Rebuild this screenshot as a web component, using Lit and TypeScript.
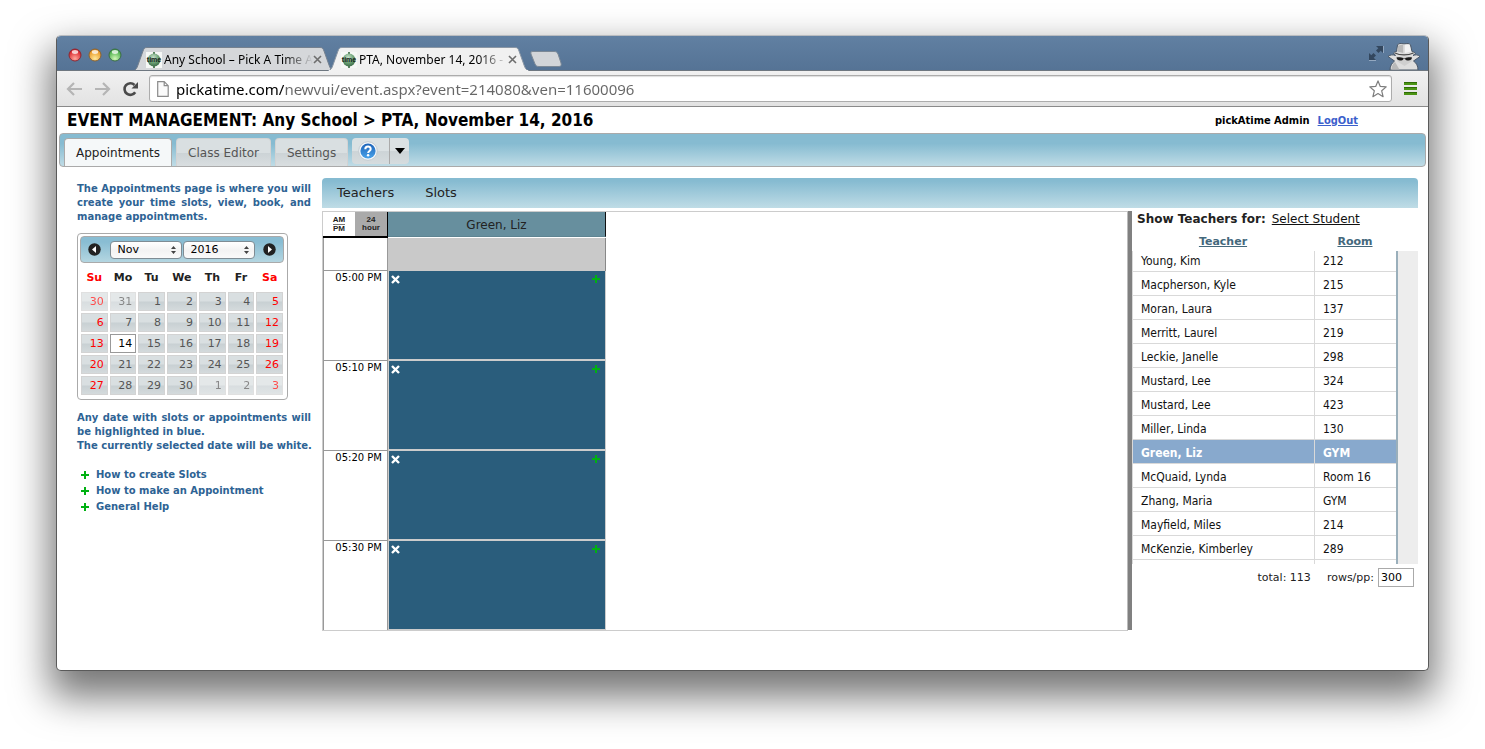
import { LitElement, html, css, svg } from "lit";
import { customElement, state } from "lit/decorators.js";
import { classMap } from "lit/directives/class-map.js";

interface Teacher {
  name: string;
  room: string;
}

const TEACHERS: Teacher[] = [
  { name: "Young, Kim", room: "212" },
  { name: "Macpherson, Kyle", room: "215" },
  { name: "Moran, Laura", room: "137" },
  { name: "Merritt, Laurel", room: "219" },
  { name: "Leckie, Janelle", room: "298" },
  { name: "Mustard, Lee", room: "324" },
  { name: "Mustard, Lee", room: "423" },
  { name: "Miller, Linda", room: "130" },
  { name: "Green, Liz", room: "GYM" },
  { name: "McQuaid, Lynda", room: "Room 16" },
  { name: "Zhang, Maria", room: "GYM" },
  { name: "Mayfield, Miles", room: "214" },
  { name: "McKenzie, Kimberley", room: "289" },
  { name: "", room: "" },
];

const SLOTS = ["05:00 PM", "05:10 PM", "05:20 PM", "05:30 PM"];
const WEEKDAYS = ["Su", "Mo", "Tu", "We", "Th", "Fr", "Sa"];
const WEEKS = [
  [30, 31, 1, 2, 3, 4, 5],
  [6, 7, 8, 9, 10, 11, 12],
  [13, 14, 15, 16, 17, 18, 19],
  [20, 21, 22, 23, 24, 25, 26],
  [27, 28, 29, 30, 1, 2, 3],
];

const plus = html`<svg class="plus" width="8" height="8" viewBox="0 0 8 8" aria-hidden="true">
  <path d="M3 0h2v3h3v2H5v3H3V5H0V3h3z" fill="#00b112" />
</svg>`;

const favicon = html`<svg class="favicon" width="16" height="16" viewBox="0 0 16 16" aria-hidden="true">
  <defs>
    <radialGradient id="globe" cx="45%" cy="30%" r="70%">
      <stop offset="0" stop-color="#c4e0c8" />
      <stop offset="0.6" stop-color="#6a9f73" />
      <stop offset="1" stop-color="#3b6c48" />
    </radialGradient>
  </defs>
  <rect width="16" height="16" fill="#f6f8f6" />
  <path d="M7 0h2v2H7zM7 14h2v2H7z" fill="#5b8462" />
  <circle cx="8" cy="8" r="6.5" fill="url(#globe)" />
  <text x="8" y="10" text-anchor="middle" font-family="Liberation Sans, Arial, sans-serif" font-size="7" font-weight="bold" fill="#14211a">time</text>
</svg>`;

const crossIcon = html`<svg width="9" height="9" viewBox="0 0 9 9" aria-hidden="true">
  <path d="M1 1l7 7M8 1l-7 7" stroke="#6e6e6e" stroke-width="1.600" fill="none" />
</svg>`;

/* Browser window: title strip with tabs, address bar, page slot. */
@customElement("browser-window")
export class BrowserWindow extends LitElement {
  static styles = css`
    :host {
      display: block;
      border: 1px solid #5a5a5a;
      border-top-color: #b9bcc0;
      border-radius: 5px;
      background: #fff;
      box-shadow: 0 20px 38px 6px rgba(0, 0, 0, 0.54);
    }
    button {
      border: 0;
      padding: 0;
      margin: 0;
      background: none;
      font: inherit;
      color: inherit;
    }
    svg {
      display: block;
    }
    .strip,
    .toolbar {
      font-family: "Noto Sans", "Open Sans", sans-serif;
    }
    .strip {
      display: flex;
      align-items: flex-end;
      height: 34px;
      border-bottom: 1px solid #6e7780;
      border-radius: 4px 4px 0 0;
      background: linear-gradient(#6180a2, #557395);
    }
    .lights {
      display: flex;
      gap: 6px;
      align-self: center;
      padding: 3px 0 0 11px;
      width: 65px;
    }
    .tab {
      position: relative;
      display: flex;
      align-items: center;
      box-sizing: border-box;
      width: 201px;
      height: 24px;
      margin-bottom: -1px;
      padding: 1px 12px 0 13px;
      font-size: 12px;
      line-height: 16px;
      color: #000;
    }
    .tab + .tab {
      margin-left: -6px;
    }
    .shape {
      position: absolute;
      inset: 0;
    }
    .favicon {
      position: relative;
      flex: none;
    }
    .label {
      position: relative;
      flex: 1;
      margin-left: 2px;
      white-space: nowrap;
      text-align: left;
      mask-image: linear-gradient(to right, #000 calc(100% - 30px), transparent);
    }
    .close {
      position: relative;
      margin: 0;
    }
    .spacer {
      flex: 1;
    }
    .newtab {
      margin: 0 0 3px 1px;
    }
    .expand {
      margin: 0 3px 9px 0;
    }
    .spy {
      margin-right: 7px;
    }
    .toolbar {
      display: flex;
      align-items: center;
      height: 35px;
      border-bottom: 1px solid #8a8a8a;
      background: linear-gradient(#f1f1f1, #e2e2e2);
      padding: 0 11px 0 9px;
    }
    .nav {
      display: flex;
      gap: 11px;
      align-items: center;
      width: 83px;
    }
    .omnibox {
      display: flex;
      flex: 1;
      align-items: center;
      box-sizing: border-box;
      height: 27px;
      border: 1px solid #acacac;
      border-radius: 3px;
      background: #fff;
      box-shadow: inset 0 1px 1px #ddd;
      padding: 0 4px 0 7px;
    }
    .url {
      flex: 1;
      min-width: 0;
      border: 0;
      padding: 0;
      margin: 0 0 0 7px;
      font-family: inherit;
      font-size: 15px;
      line-height: 22px;
      color: #555;
      -webkit-text-fill-color: transparent;
      background: linear-gradient(to right, #000 108px, #666 108px);
      -webkit-background-clip: text;
      background-clip: text;
    }
    .menu {
      margin-left: 12px;
    }
  `;

  private light(a: string, b: string, c: string, id: string) {
    return html`<svg width="14" height="14" viewBox="0 0 14 14" aria-hidden="true">
      <defs>
        <radialGradient id=${id} cx="50%" cy="80%" r="75%">
          <stop offset="0" stop-color=${a} />
          <stop offset="1" stop-color=${b} />
        </radialGradient>
      </defs>
      <circle cx="7" cy="7" r="6" fill="url(#${id})" stroke=${c} />
      <ellipse cx="7" cy="4" rx="3.200" ry="1.900" fill="#fff" opacity="0.75" />
    </svg>`;
  }

  private tab(label: string, active: boolean) {
    return html`<button class="tab">
      <svg class="shape" width="201" height="24" viewBox="0 0 201 24" aria-hidden="true">
        <path
          d="M0 24C3 23 4 21 5 18L10 4C11 1 12 .5 14 .5H187C189 .5 190 1 191 4L196 18C197 21 198 23 201 24Z"
          fill=${active ? "#f1f1f1" : "#d5d7da"}
          stroke=${active ? "#8b97a5" : "#75818f"}
        />
        ${active ? svg`<path d="M1 23.500H200" stroke="#f1f1f1" />` : svg`<path d="M0 23.500H201" stroke="#6e7780" />`}
      </svg>
      ${favicon}
      <span class="label">${label}</span>
      <span class="close">${crossIcon}</span>
    </button>`;
  }

  render() {
    return html`
      <div class="strip">
        <div class="lights">
          ${this.light("#ffa79c", "#d3101a", "#8a2a34", "red")}
          ${this.light("#ffe99a", "#e58a10", "#8a6334", "amber")}
          ${this.light("#d2f9b8", "#34a13a", "#3c6d48", "green")}
        </div>
        ${this.tab("Any School – Pick A Time A", false)} ${this.tab("PTA, November 14, 2016 -", true)}
        <button class="newtab" aria-label="New tab">
          <svg width="32" height="16" viewBox="0 0 32 16">
            <path d="M3 .5H24C26 .5 27 1 28 3L31 12C31.500 14 31 15.500 29 15.500H9C7 15.500 6 15 5 13L1 3C.5 1 1 .5 3 .5Z" fill="#d2d5d9" stroke="#7b8896" />
          </svg>
        </button>
        <span class="spacer"></span>
        <button class="expand" aria-label="Full screen">
          <svg width="16" height="16" viewBox="0 0 16 16" fill="#33475e">
            <path d="M8 1h7v7l-2.300-2.300L10.500 8 8 5.500l2.300-2.200z" />
            <path d="M8 15H1V8l2.300 2.300L5.500 8 8 10.500l-2.300 2.200z" />
            <path d="M1 15.500h7M15.500 1v7" stroke="#93a8c0" fill="none" />
          </svg>
        </button>
        <svg class="spy" width="34" height="28" viewBox="0 0 34 28" aria-hidden="true">
          <path
            d="M3 28C3 24 5 21 7.500 19L1 14.500C3.500 12.500 6 12.500 8.500 13.500L6.500 11C7.500 10 8.500 9.500 9.500 9.500L10.500 3C11.500 1 14 1.500 17 1.800 20 1.500 22.500 1 23.500 3L25 9.500C26.500 9.800 28 10.500 28.500 11.500L26 13.500C28.500 12.500 31 12.500 33 14.500L26.500 19C29.500 21 31 24 31 28z"
            fill="#dedede"
            stroke="#4a5868"
          />
          <path d="M11.200 3.500l-1 6 6 1.500V2.500zM8 20l4.500 7.500H4.500C4.500 24 6 21.500 8 20z" fill="#b9b9b9" />
          <path d="M18 3l4.500-.5 1.500 7-6 1.500z" fill="#f4f4f4" />
          <path d="M9 14.500h16.500l-1 5-7 4.500-7-4.500z" fill="#cfcfcf" />
          <path d="M8 11c5 2.600 13 2.600 18.500 0" stroke="#4a4a4a" stroke-width="1.300" fill="none" />
          <path d="M9.500 15.500c2.500-.4 5.500 0 7 .9h1.500c1.500-.9 4.500-1.300 7-.9-.4 2.200-1.600 3-3.400 3S18.700 18 18 16.900h-1.500c-.7 1.100-1.600 1.600-3.400 1.600s-3.200-.8-3.600-3z" fill="#1c1c1c" />
        </svg>
      </div>
      <div class="toolbar">
        <div class="nav">
          <button aria-label="Back">
            <svg width="17" height="14" viewBox="0 0 17 14" fill="none" stroke="#b5b5b5" stroke-width="2.200">
              <path d="M16 7H2.500M8 1L2 7l6 6" />
            </svg>
          </button>
          <button aria-label="Forward">
            <svg width="17" height="14" viewBox="0 0 17 14" fill="none" stroke="#b5b5b5" stroke-width="2.200">
              <path d="M1 7h13.500M9 1l6 6-6 6" />
            </svg>
          </button>
          <button aria-label="Reload">
            <svg width="17" height="16" viewBox="0 0 17 16">
              <path d="M13.200 11.200A5.800 5.800 0 1 1 12.500 4" fill="none" stroke="#4a4a4a" stroke-width="2.600" />
              <path d="M16 1v6.500H9.500z" fill="#4a4a4a" />
            </svg>
          </button>
        </div>
        <div class="omnibox">
          <svg width="12" height="16" viewBox="0 0 12 16" aria-hidden="true">
            <path d="M.7.700h6.500l4 4v10.600H.7zM7.200.700v4h4" fill="#fafafa" stroke="#8b8b8b" stroke-width="1.200" />
          </svg>
          <input class="url" aria-label="Address" value="pickatime.com/newvui/event.aspx?event=214080&ven=11600096" />
          <button aria-label="Bookmark this page">
            <svg width="18" height="18" viewBox="0 0 18 18">
              <path d="M9 .9l2.300 5.500 5.900.5-4.500 3.900 1.400 5.900L9 13.600l-5.100 3.100 1.400-5.900L.8 6.900l5.900-.5z" fill="#fff" stroke="#7d7d7d" stroke-width="1.200" stroke-linejoin="round" />
            </svg>
          </button>
        </div>
        <button class="menu" aria-label="Menu">
          <svg width="13" height="13" viewBox="0 0 13 13" fill="#4b9413">
            <path d="M0 0h13v3H0zM0 5h13v3H0zM0 10h13v3H0z" />
            <path d="M0 0h13v1H0zM0 5h13v1H0zM0 10h13v1H0z" fill="#2f6b06" />
          </svg>
        </button>
      </div>
      <slot></slot>
    `;
  }
}

/* Month calendar used to pick the event date. */
@customElement("date-picker")
export class DatePicker extends LitElement {
  static styles = css`
    :host {
      display: block;
      box-sizing: border-box;
      width: 211px;
      border: 1px solid #aaa;
      border-radius: 4px;
      padding: 2px 2px 3px;
      font-family: "DejaVu Sans", Verdana, sans-serif;
      font-size: 11px;
      line-height: 14px;
      color: #222;
    }
    .head {
      display: flex;
      align-items: center;
      height: 25px;
      margin-right: 1px;
      border: 1px solid #aaa;
      border-radius: 4px;
      background: linear-gradient(#89bdd3 20%, #b4d6e1);
      padding: 0 7px;
    }
    .arrow {
      border: 0;
      padding: 0;
      background: none;
      height: 13px;
    }
    .arrow svg {
      display: block;
    }
    .fields {
      display: flex;
      flex: 1;
      justify-content: center;
      gap: 1px;
    }
    .field {
      position: relative;
      width: 72px;
    }
    select {
      display: block;
      appearance: none;
      box-sizing: border-box;
      width: 100%;
      height: 18px;
      border: 1px solid #7f8c94;
      border-radius: 4px;
      background: linear-gradient(#fff, #f3f3f3 50%, #fafafa);
      padding: 0 7px;
      font: inherit;
      color: #000;
    }
    .chevrons {
      position: absolute;
      right: 6px;
      top: 5px;
      pointer-events: none;
    }
    table {
      width: 204px;
      border-spacing: 0;
      margin-top: 5px;
      table-layout: fixed;
    }
    th {
      height: 20px;
      padding: 0 0 3px;
      font-weight: bold;
      text-align: center;
    }
    th:nth-child(4) {
      width: 32px;
    }
    td {
      padding: 1px;
    }
    .day {
      display: block;
      box-sizing: border-box;
      width: 100%;
      height: 19px;
      border: 1px solid #d3d3d3;
      padding: 0 3px 0 0;
      background: linear-gradient(#d9dfe1 48%, #c8d0d3 52%, #d4dadc);
      font: inherit;
      color: #555;
      text-align: right;
    }
    .weekend {
      color: #f00;
    }
    .other {
      opacity: 0.7;
    }
    .selected {
      border-color: #999;
      background: #fff;
      color: #000;
    }
  `;

  @state() private selected = 14;

  private arrow(label: string, d: string) {
    return html`<button class="arrow" aria-label=${label}>
      <svg width="13" height="13" viewBox="0 0 13 13">
        <circle cx="6.500" cy="6.500" r="6.200" fill="#222" />
        <path d=${d} fill="#fff" />
      </svg>
    </button>`;
  }

  private field(label: string, value: string) {
    return html`<div class="field">
      <select aria-label=${label}>
        <option selected>${value}</option>
      </select>
      <svg class="chevrons" width="5" height="8" viewBox="0 0 5 8" aria-hidden="true">
        <path d="M2.500 0L5 3H0zM2.500 8L5 5H0z" fill="#444" />
      </svg>
    </div>`;
  }

  private cell(day: number, week: number, column: number) {
    const other = (week === 0 && day > 20) || (week === 4 && day < 20);
    const classes = {
      day: true,
      weekend: column === 0 || column === 6,
      other,
      selected: !other && day === this.selected,
    };
    return html`<td>
      <button class=${classMap(classes)} @click=${() => !other && (this.selected = day)}>${day}</button>
    </td>`;
  }

  render() {
    return html`
      <div class="head">
        ${this.arrow("Previous month", "M8 3v7L4 6.500z")}
        <div class="fields">${this.field("Month", "Nov")} ${this.field("Year", "2016")}</div>
        ${this.arrow("Next month", "M5 3v7l4-3.500z")}
      </div>
      <table>
        <thead>
          <tr>
            ${WEEKDAYS.map((d, i) => html`<th class=${i % 6 === 0 ? "weekend" : ""}>${d}</th>`)}
          </tr>
        </thead>
        <tbody>
          ${WEEKS.map((w, i) => html`<tr>${w.map((d, c) => this.cell(d, i, c))}</tr>`)}
        </tbody>
      </table>
    `;
  }
}

/* Time slots of the chosen teacher. */
@customElement("slot-schedule")
export class SlotSchedule extends LitElement {
  static styles = css`
    :host {
      display: block;
      border: 1px solid #ccc;
      border-right-color: #bbb;
      font-family: "DejaVu Sans", Verdana, sans-serif;
      color: #222;
    }
    button {
      border: 0;
      padding: 0;
      background: none;
    }
    svg {
      display: block;
    }
    .grid {
      display: grid;
      grid-template-columns: 65px 218px;
    }
    .clock {
      display: grid;
      grid-template-columns: 1fr 1fr;
      box-sizing: border-box;
      height: 26px;
      border-right: 1px solid #000;
      border-bottom: 2px solid #000;
    }
    .mode {
      font: bold 8px/8px "Liberation Sans", Arial, sans-serif;
      color: #222;
      text-align: center;
    }
    .mode.off {
      background: #aaa;
    }
    .am {
      display: inline-block;
      border-bottom: 1px solid #777;
    }
    .teacher {
      box-sizing: border-box;
      height: 25px;
      border-right: 1px solid #111;
      border-bottom: 1px solid #5f8592;
      background: #678f9e;
      font-size: 12px;
      line-height: 26px;
      text-align: center;
    }
    .time {
      box-sizing: border-box;
      height: 90px;
      border: solid #999;
      border-width: 0 1px 1px;
      padding-right: 5px;
      font-size: 10px;
      line-height: 14px;
      text-align: right;
      color: #000;
    }
    .time.blank,
    .closed {
      height: 33px;
    }
    .closed {
      box-sizing: border-box;
      border-right: 1px solid #888;
      background: #c9c9c9;
    }
    .slot {
      display: flex;
      justify-content: space-between;
      align-items: flex-start;
      box-sizing: border-box;
      height: 90px;
      border: solid #ccc;
      border-width: 0 1px 2px;
      background: #2a5d7c;
      padding: 4px 5px 0 2px;
    }
    .time.last {
      height: 89px;
      border-bottom: 0;
    }
    .slot.last {
      height: 89px;
      border-bottom-width: 1px;
    }
  `;

  render() {
    return html`<div class="grid">
      <div class="clock">
        <button class="mode"><span class="am">AM</span><br />PM</button>
        <button class="mode off">24<br />hour</button>
      </div>
      <div class="teacher">Green, Liz</div>
      <div class="time blank"></div>
      <div class="closed"></div>
      ${SLOTS.map((t, i) => {
        const last = i === SLOTS.length - 1;
        return html`
          <div class=${classMap({ time: true, last })}>${t}</div>
          <div class=${classMap({ slot: true, last })}>
            <button aria-label="Remove slot">
              <svg width="9" height="9" viewBox="0 0 9 9">
                <path d="M1 1l7 7M8 1l-7 7" stroke="#fff" stroke-width="2.400" />
              </svg>
            </button>
            <button aria-label="Add appointment">${plus}</button>
          </div>
        `;
      })}
    </div>`;
  }
}

/* Teacher list beside the schedule. */
@customElement("teacher-list")
export class TeacherList extends LitElement {
  static styles = css`
    :host {
      display: block;
      font-family: "DejaVu Sans", Verdana, sans-serif;
      font-size: 11px;
      color: #222;
    }
    .for {
      display: flex;
      gap: 6px;
      padding-left: 5px;
      font-size: 12px;
      line-height: 16px;
    }
    .for a {
      color: #111;
    }
    table {
      width: 100%;
      border-spacing: 0;
      table-layout: fixed;
    }
    .room {
      width: 82px;
    }
    .heads {
      padding-right: 22px;
      margin: 7px 0 2px;
    }
    .heads a {
      color: #44687c;
      font-weight: bold;
      font-size: 11px;
    }
    th {
      height: 15px;
      padding: 0;
      text-align: center;
    }
    .view {
      height: 313px;
      overflow: hidden;
      border-right: 20px solid #ededed;
    }
    .rows {
      margin-top: -3px;
      border-right: 2px solid #9aafbb;
      font-family: "DejaVu Sans Condensed", Tahoma, "Noto Sans", sans-serif;
      font-size: 12px;
      line-height: 16px;
      color: #111;
    }
    .rows td {
      height: 21px;
      box-sizing: content-box;
      border-left: 1px solid #d9d9d9;
      border-bottom: 1px solid #d9d9d9;
      padding: 2px 0 0 8px;
    }
    .current td {
      background: #88a9cd;
      color: #fff;
      font-weight: bold;
    }
    .foot {
      display: flex;
      justify-content: flex-end;
      align-items: center;
      gap: 4px;
      padding: 4px 4px 0 0;
      line-height: 14px;
    }
    .total {
      margin-right: 12px;
    }
    .perpage {
      box-sizing: border-box;
      width: 36px;
      height: 19px;
      border: 1px solid #aaa;
      padding: 0 2px;
      font: inherit;
      color: #000;
    }
  `;

  @state() private current = 8;

  render() {
    return html`
      <div class="for"><b>Show Teachers for:</b> <a href="#student">Select Student</a></div>
      <div class="heads">
        <table>
          <thead>
            <tr>
              <th><a href="#teacher">Teacher</a></th>
              <th class="room"><a href="#room">Room</a></th>
            </tr>
          </thead>
        </table>
      </div>
      <div class="view">
        <table class="rows">
          <colgroup>
            <col />
            <col class="room" />
          </colgroup>
          <tbody>
            ${TEACHERS.map(
              (t, i) => html`<tr class=${i === this.current ? "current" : ""} @click=${() => (this.current = i)}>
                <td>${t.name}</td>
                <td>${t.room}</td>
              </tr>`
            )}
          </tbody>
        </table>
      </div>
      <div class="foot">
        <span class="total">total: 113</span>
        <label for="perpage">rows/pp:</label>
        <input id="perpage" class="perpage" value="300" />
      </div>
    `;
  }
}

@customElement("app-root")
export class AppRoot extends LitElement {
  static styles = css`
    :host {
      display: block;
      overflow: hidden;
      min-height: 100vh;
      box-sizing: border-box;
      padding: 35px 56px 78px;
      background: #fff;
      font-family: "DejaVu Sans", Verdana, sans-serif;
      font-size: 13px;
      color: #222;
    }
    .title {
      display: flex;
      justify-content: space-between;
      align-items: center;
      height: 26px;
      padding: 0 70px 0 10px;
      font-family: "DejaVu Sans Condensed", Tahoma, "Noto Sans", sans-serif;
      color: #000;
    }
    h1 {
      margin: 0;
      font-size: 17px;
      line-height: 24px;
    }
    .user {
      display: flex;
      gap: 8px;
      font-size: 11px;
      font-weight: bold;
    }
    .user a {
      color: #3b5fcc;
    }
    .tabs {
      display: flex;
      align-items: flex-end;
      gap: 4px;
      box-sizing: border-box;
      height: 34px;
      margin: 0 2px;
      padding-left: 4px;
      border: 1px solid #aaa;
      border-radius: 4px;
      background: linear-gradient(#86bbd1 30%, #bfdce6);
    }
    button {
      margin: 0;
      border: 0;
      font: inherit;
      color: inherit;
    }
    .tab {
      height: 28px;
      border: 1px solid #d3d3d3;
      border-bottom: 0;
      border-radius: 4px 4px 0 0;
      background: linear-gradient(#d9dfe1 50%, #ccd3d6 52%, #d9dee0);
      padding: 0 11px;
      font-size: 12px;
      color: #555;
    }
    .tab.active {
      border-color: #aaa;
      background: #f5f8f9;
      color: #222;
    }
    .help {
      display: flex;
      height: 26px;
      margin-bottom: 2px;
      border-radius: 4px;
      background: linear-gradient(#dbe1e3 50%, #cdd4d7 52%, #d6dcde);
    }
    .help button {
      display: flex;
      align-items: center;
      justify-content: center;
      width: 19px;
      padding: 0;
      background: none;
    }
    .help button:first-child {
      width: 38px;
      border-right: 1px solid #aaa;
      padding-right: 5px;
    }
    .body {
      display: flex;
      gap: 11px;
      align-items: flex-start;
      padding: 11px 10px 39px 20px;
    }
    .side {
      width: 234px;
      flex: none;
      padding-top: 4px;
      font-size: 10px;
      line-height: 14px;
      font-weight: bold;
      color: #2e6394;
      text-align: justify;
    }
    .side p {
      margin: 0;
    }
    .side .single {
      white-space: nowrap;
    }
    date-picker {
      margin: 9px 0 11px;
      font-weight: normal;
      text-align: left;
    }
    .tips {
      list-style: none;
      margin: 14px 0 0;
      padding: 0 0 0 4px;
      line-height: 16px;
    }
    .tips a {
      display: flex;
      align-items: center;
      gap: 7px;
      color: inherit;
      text-decoration: none;
    }
    .main {
      flex: 1;
      min-width: 0;
    }
    .menubar {
      display: flex;
      gap: 31px;
      height: 30px;
      margin-bottom: 3px;
      padding: 0 15px;
      border-radius: 4px 4px 0 0;
      background: linear-gradient(#86bbd1 10%, #bfdce6);
    }
    .menubar button {
      background: none;
      padding: 0 0 1px;
      font-size: 13px;
    }
    .panes {
      display: flex;
    }
    slot-schedule {
      flex: 1;
    }
    .divider {
      width: 4px;
      margin-bottom: 1px;
      background: #808080;
    }
    teacher-list {
      width: 286px;
    }
  `;

  render() {
    return html`
      <browser-window>
        <header class="title">
          <h1>EVENT MANAGEMENT: Any School &gt; PTA, November 14, 2016</h1>
          <div class="user"><span>pickAtime Admin</span><a href="#logout">LogOut</a></div>
        </header>
        <nav class="tabs">
          <button class="tab active">Appointments</button>
          <button class="tab">Class Editor</button>
          <button class="tab">Settings</button>
          <div class="help">
            <button aria-label="Help">
              <svg width="20" height="20" viewBox="0 0 20 20">
                <defs>
                  <linearGradient id="ball" x2="0" y2="1">
                    <stop offset="0" stop-color="#1c62b8" />
                    <stop offset="1" stop-color="#4aa3ea" />
                  </linearGradient>
                </defs>
                <circle cx="10" cy="10" r="9.300" fill="#f4f7fa" stroke="#c2cad0" />
                <circle cx="10" cy="10" r="7.600" fill="url(#ball)" />
                <path d="M7.300 8.200C7.300 4.600 12.800 4.700 12.700 8c0 1.900-2.600 2-2.600 4" fill="none" stroke="#fff" stroke-width="2" />
                <circle cx="10.100" cy="14.300" r="1.200" fill="#fff" />
              </svg>
            </button>
            <button aria-label="Help options">
              <svg width="10" height="6" viewBox="0 0 10 6"><path d="M0 0h10L5 6z" fill="#000" /></svg>
            </button>
          </div>
        </nav>
        <div class="body">
          <aside class="side">
            <p>The Appointments page is where you will create your time slots, view, book, and manage appointments.</p>
            <date-picker></date-picker>
            <p>Any date with slots or appointments will be highlighted in blue.</p>
            <p class="single">The currently selected date will be white.</p>
            <ul class="tips">
              <li><a href="#slots">${plus} How to create Slots</a></li>
              <li><a href="#book">${plus} How to make an Appointment</a></li>
              <li><a href="#help">${plus} General Help</a></li>
            </ul>
          </aside>
          <section class="main">
            <div class="menubar">
              <button>Teachers</button>
              <button>Slots</button>
            </div>
            <div class="panes">
              <slot-schedule></slot-schedule>
              <div class="divider"></div>
              <teacher-list></teacher-list>
            </div>
          </section>
        </div>
      </browser-window>
    `;
  }
}
